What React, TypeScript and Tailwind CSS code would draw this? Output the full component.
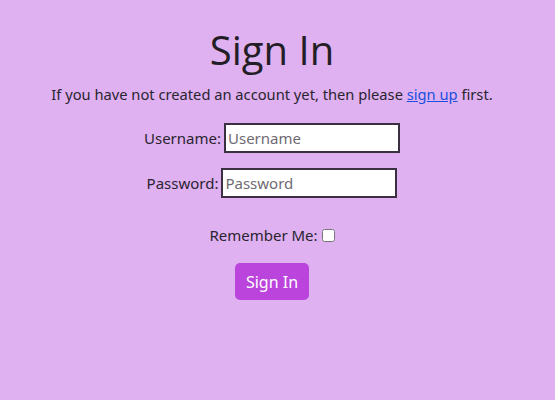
import React from "react";

export default function App() {
	return (
		<div className="min-h-[400px] w-full bg-[#dfb1f0] font-['Noto_Sans',sans-serif] text-[#222] flex flex-col items-center pt-[24px] pr-[11px]">
			<h1 className="text-[40px] leading-[52px] font-medium font-['Open_Sans',sans-serif] text-[#231d26]">Sign In</h1>
			<p className="mt-[7px] text-[14.7px] leading-[22px] text-[#2a2430]">
				If you have not created an account yet, then please{" "}
				<a href="#" className="text-[#1a4fe0] underline">
					sign up
				</a>{" "}
				first.
			</p>
			<form className="mt-[18px] flex flex-col items-center text-[15px] text-[#2a2430]">
				<label className="flex items-center gap-[3px] h-[30px]">
					Username:
					<input
						type="text"
						placeholder="Username"
						className="w-[176px] h-[30px] bg-white border-2 border-[#3a3040] px-[2px] text-[15px] placeholder:text-[#6e6a72] outline-none"
					/>
				</label>
				<label className="mt-[15px] flex items-center gap-[3px] h-[30px]">
					Password:
					<input
						type="password"
						placeholder="Password"
						className="w-[176px] h-[30px] bg-white border-2 border-[#3a3040] px-[2px] text-[15px] placeholder:text-[#6e6a72] outline-none"
					/>
				</label>
				<label className="mt-[27px] flex items-center gap-[4px] h-[20px]">
					Remember Me:
					<input type="checkbox" className="w-[13px] h-[13px]" />
				</label>
				<button
					type="button"
					className="mt-[18px] w-[74px] h-[37px] rounded-[5px] bg-[#bb44dd] text-white text-[16px]"
				>
					Sign In
				</button>
			</form>
		</div>
	);
}
